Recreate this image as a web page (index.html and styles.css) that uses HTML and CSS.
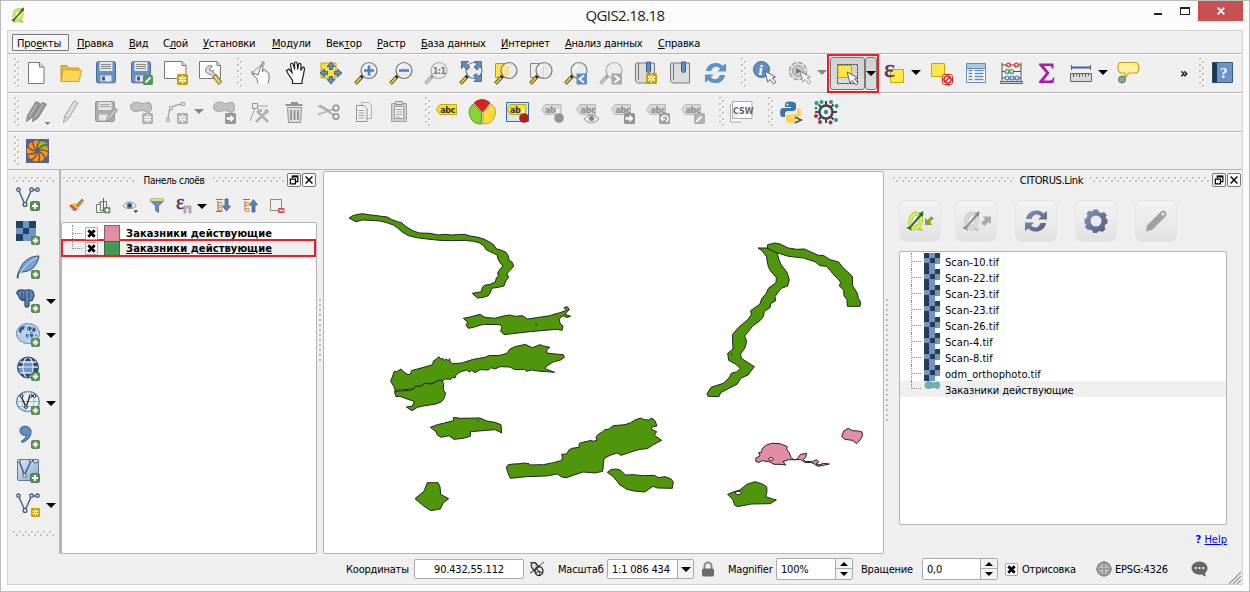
FILE: index.html
```html
<!DOCTYPE html>
<html lang="ru">
<head>
<meta charset="utf-8">
<title>QGIS2.18.18</title>
<link rel="stylesheet" href="styles.css">
</head>
<body>
<svg class="defs" aria-hidden="true">
  <defs>
    <linearGradient id="gSteel" x1="0" y1="0" x2="1" y2="1"><stop offset="0" stop-color="#8496bd"/><stop offset="1" stop-color="#4e5a78"/></linearGradient>
    <linearGradient id="gPale" x1="0" y1="0" x2="1" y2="1"><stop offset="0" stop-color="#dfe8f2"/><stop offset="1" stop-color="#86a8cf"/></linearGradient>
  </defs>
  <symbol id="plus" viewBox="0 0 10 10"><rect x=".5" y=".5" width="9" height="9" rx="1.500" fill="#5a9157" stroke="#4f814c"/><path d="M5 2v6M2 5h6" stroke="#fff" stroke-width="2"/></symbol>
  <symbol id="star" viewBox="0 0 11 11"><rect width="11" height="11" rx="1.500" fill="#c8a000"/><path d="M5.500 1.500v8M2 3.500l7 4M9 3.500l-7 4" stroke="#fff" stroke-width="1.500"/><circle cx="5.500" cy="5.500" r="1" fill="#c8a000"/></symbol>
  <symbol id="starG" viewBox="0 0 11 11"><rect width="11" height="11" rx="1.500" fill="#aaa"/><path d="M5.500 1.500v8M2 3.500l7 4M9 3.500l-7 4" stroke="#fff" stroke-width="1.500"/><circle cx="5.500" cy="5.500" r="1" fill="#aaa"/></symbol>
  <symbol id="arrG" viewBox="0 0 11 11"><rect width="11" height="11" rx="1.500" fill="#8c8c8c"/><path d="M1.500 4.200h4V1.800l4 3.700-4 3.700V6.800h-4z" fill="#fff"/></symbol>
  <symbol id="lens" viewBox="0 0 24 24"><path d="M1.500 22.500L8.500 15" stroke="#222" stroke-width="3.400"/><path d="M1.800 22.200L7 16.600" stroke="#f6c61c" stroke-width="2.200"/><circle cx="15" cy="9.500" r="8" fill="#e9eaec" fill-opacity=".75" stroke="#777" stroke-width="1.200"/><path d="M9.500 9a6 6 0 0 1 5-5" stroke="#fff" fill="none" stroke-width="1.500"/></symbol>
  <symbol id="lensG" viewBox="0 0 24 24"><path d="M1.500 22.500L8.500 15" stroke="#999" stroke-width="3.400"/><path d="M1.800 22.200L7 16.600" stroke="#ccc" stroke-width="2"/><circle cx="15" cy="9.500" r="8" fill="#ececec" stroke="#aaa" stroke-width="1.200"/></symbol>
  <symbol id="cursor" viewBox="0 0 14 16"><path d="M1 1l3 12 2.500-3 4 5 2.300-2-4-4.600 3.500-1z" fill="#fff" stroke="#555" stroke-linejoin="round"/></symbol>
  <symbol id="blobG" viewBox="0 0 24 24"><path d="M1.500 7C2 2 7 1 11 3c4 1.500 6-1 9-.5s3.500 8 .5 9.500-5-2-8-1.500S2 13.500 1.500 7z" fill="#bcbcbc" stroke="#999"/></symbol>
  <symbol id="tagG" viewBox="0 0 24 24"><path d="M1.500 10.500L5 5.500h15.500v10H5z" fill="#d6d6d6" stroke="#b4b4b4"/><text x="5.500" y="13.500" class="abc" fill="#808080">abc</text></symbol>
  <symbol id="vee" viewBox="0 0 24 24"><path d="M2.500 3L9 17.500 15.500 3H21" fill="none" stroke="#4d6480" stroke-width="1.500"/><g fill="#f4f6f8" stroke="#3f5877" stroke-width="1.300"><circle cx="2.500" cy="2.700" r="1.700"/><circle cx="9" cy="17.500" r="1.900"/><circle cx="15.500" cy="2.700" r="1.700"/><circle cx="21.500" cy="2.700" r="1.700"/></g></symbol>
  <symbol id="qlogo" viewBox="0 0 24 24"><path d="M12 17c2 1 3 5 8 5.500" fill="none" stroke="#c3cc4e" stroke-width="3.200"/><ellipse cx="12" cy="12" rx="6" ry="8.500" transform="rotate(12 12 12)" fill="none" stroke="#a9b34e" stroke-width="4.600"/><ellipse cx="12" cy="12" rx="6" ry="8.500" transform="rotate(12 12 12)" fill="none" stroke="#dfec50" stroke-width="3.400"/><path d="M1 19l4-.5L17 4.500l-2-.5 6-3.500-.5 7-1.500-1.500L7 19.500l.5 4L4.500 21z" fill="#177322"/></symbol>
  <symbol id="qlogoG" viewBox="0 0 24 24"><path d="M12 17c2 1 3 5 8 5.500" fill="none" stroke="#c4c4c4" stroke-width="3.200"/><ellipse cx="12" cy="12" rx="6" ry="8.500" transform="rotate(12 12 12)" fill="none" stroke="#bbb" stroke-width="4.600"/><ellipse cx="12" cy="12" rx="6" ry="8.500" transform="rotate(12 12 12)" fill="none" stroke="#dadada" stroke-width="3.400"/><path d="M1 19l4-.5L17 4.500l-2-.5 6-3.500-.5 7-1.500-1.500L7 19.500l.5 4L4.500 21z" fill="#8a8a8a"/></symbol>
  <symbol id="sync" viewBox="0 0 24 24"><path d="M2 10C3 4 8 1 13 1.500c3 .2 5 1.500 6.500 3L23 2v8.500h-9l3-3c-4-3.500-8-2-9.500 2.500zM22 14c-1 6-6 9-11 8.500-3-.2-5-1.500-6.500-3L1 22v-8.500h9l-3 3c4 3.500 8 2 9.500-2.500z"/></symbol>
  <symbol id="float" viewBox="0 0 14 14"><path d="M5 5V2.500h6.500V9H9" fill="none" stroke="#000" stroke-width="1.400"/><path d="M5 3h6.500" stroke="#000" stroke-width="2"/><path d="M2.700 6h6v5.500h-6z" fill="#fff" stroke="#000" stroke-width="1.400"/></symbol>
  <symbol id="close" viewBox="0 0 14 14"><path d="M3 3l8 8M11 3l-8 8" stroke="#000" stroke-width="1.600"/></symbol>
  <symbol id="rast" viewBox="0 0 16 16"><g shape-rendering="crispEdges"><rect width="16" height="16" fill="#6c95c8"/><path d="M0 0h5v5H0zM6 5h5v5H6zM0 10h5v6H0zM11 0h5v5h-5z" fill="#2c3c50"/><path d="M11 11h5v5h-5z" fill="#fff"/></g></symbol>
</svg>

<div class="window">
  <header class="titlebar">
    <svg class="app-icon" viewBox="0 0 24 24"><use href="#qlogo"/></svg>
    <h1 class="caption">QGIS2.18.18</h1>
    <div class="win-buttons">
      <span class="wb-min"></span><span class="wb-max"></span>
      <span class="wb-close"><svg viewBox="0 0 8 8"><path d="M.7.7l6.600 6.600M7.300.7L.7 7.300" stroke="#fff" stroke-width="1.700"/></svg></span>
    </div>
  </header>

  <div class="client">
    <nav class="menu">
      <span class="open">Про<u>е</u>кты</span><span><u>П</u>равка</span><span><u>В</u>ид</span><span>С<u>л</u>ой</span><span><u>У</u>становки</span><span><u>М</u>одули</span><span>Век<u>т</u>ор</span><span><u>Р</u>астр</span><span><u>Б</u>аза данных</span><span><u>И</u>нтернет</span><span><u>А</u>нализ данных</span><span><u>С</u>правка</span>
    </nav>

    <div class="toolbar">
      <i class="grip"></i>
      <div class="group">
        <svg viewBox="0 0 24 24"><path d="M4.500 1.500h11l4.500 4.500v16.500H4.500z" fill="#fff" stroke="#777"/><path d="M15.500 1.500V6H20" fill="#ddd" stroke="#777"/></svg>
        <svg viewBox="0 0 24 24"><path d="M2 20.500V4.500h6l1.500 2.500H20v3" fill="#e9bd33" stroke="#c79b1c"/><path d="M4 8.500l18.500 1-2.500 11H2z" fill="#fbd658" stroke="#d0a427"/></svg>
        <svg viewBox="0 0 24 24"><rect x="2.500" y=".8" width="19" height="21" rx="1.500" fill="#6391c4" stroke="#4d6d92"/><path d="M5.500 1h13v9h-13z" fill="#e4e7ea"/><path d="M7 3.500h10M7 5.500h10M7 7.500h10" stroke="#888"/><path d="M6.500 14.500h11v6h-11z" fill="#e4e7ea"/><path d="M8 15.500h3v4H8z" fill="#3f5c7e"/></svg>
        <svg viewBox="0 0 24 24"><rect x="2.500" y=".8" width="19" height="21" rx="1.500" fill="#6391c4" stroke="#4d6d92"/><path d="M5.500 1h13v9h-13z" fill="#e4e7ea"/><path d="M7 3.500h10M7 5.500h10M7 7.500h10" stroke="#888"/><path d="M6.500 14.500h11v6h-11z" fill="#e4e7ea"/><path d="M8 15.500h3v4H8z" fill="#3f5c7e"/><rect x="14" y="14" width="10" height="10" rx="1.500" fill="#56905a"/><path d="M16.500 21.500l5-5" stroke="#fff" stroke-width="2"/></svg>
        <svg viewBox="0 0 24 24"><path d="M.5.500H18l4 4V17.500H.5z" fill="#fff" stroke="#777"/><path d="M18 .5v4h4" fill="#ddd" stroke="#777"/><use href="#star" x="13" y="13" width="11" height="11"/></svg>
        <svg viewBox="0 0 24 24"><path d="M.5.500H18l3.500 4V17.500H.5z" fill="#fff" stroke="#777"/><path d="M18 .5v4h3.500" fill="#ddd" stroke="#777"/><path d="M15 14l6.500 8.500" stroke="#8e6c15" stroke-width="4.600"/><path d="M15.500 15l5.500 7" stroke="#f2d06a" stroke-width="2.800"/><path d="M7.500 6.500a4 4 0 0 1 6-1l-3 1.500 1 3 3-.5c-.3 2-.5 2.500 1.500 5l-2.500 1.500c-1-2.500-2-2.500-3.500-3a4 4 0 0 1-2.500-6.500z" fill="#dcdcdc" stroke="#808080"/></svg>
      </div>
      <i class="grip"></i>
      <div class="group nav">
        <svg viewBox="0 0 24 24"><path d="M9 22.500l-1-4.500-4-4 .5-2 4.500 2L12.500 4l1.500 0-.5 7 1-2.500 2 .5.500 1.500 2 .8L20 13v5l-1 4.500" fill="#fff" stroke="#777"/><path d="M3 12.500l2.500-3 7-6L15 1M12 1h3v3M3 10v3h3" stroke="#888" fill="none"/></svg>
        <svg viewBox="0 0 24 24"><path d="M8.500 22.500v-3L4 12.500 2.500 9.500 5 8l3 3.500L6.500 4c0-2 2-2.500 2.700-.5l1.500 5-.2-6c0-2 2.500-2 2.700 0l.5 6 .8-5c.5-1.800 2.500-1.500 2.500.3l-.3 5.700 1.500-2.500c1-1.500 2.500-.5 2.300 1L19 16l-1 3.500v3z" fill="#fff" stroke="#222" stroke-width="1.200"/></svg>
        <svg viewBox="0 0 24 24"><path d="M2 2h15v15H2z" fill="#ffdf3e" stroke="#c5a400"/><path d="M12 1l4 4.500h-2.500v3h-3v-3H8zM12 23l4-4.500h-2.500v-3h-3v3H8zM1 12l4.500-4v2.500h3v3h-3V16zM23 12l-4.500-4v2.500h-3v3h3V16z" fill="#5d8ec4" stroke="#30537d" stroke-width=".8"/></svg>
        <svg viewBox="0 0 24 24"><use href="#lens"/><path d="M15 4.500v10M10 9.500h10" stroke="#4f83bd" stroke-width="2.600"/></svg>
        <svg viewBox="0 0 24 24"><use href="#lens"/><path d="M10 9.500h10" stroke="#4f83bd" stroke-width="2.600"/></svg>
        <svg viewBox="0 0 24 24"><use href="#lensG"/><text x="8.800" y="13" class="one">1:1</text></svg>
        <svg viewBox="0 0 24 24"><use href="#lens"/><path d="M2.500.5h7l-2.500 2.500 4 3-3 3-3.500-3.500-2 2zM22.500.5h-7L18 3l-3 3 3 3 2.500-3.500 2 2zM22.500 20.500v-7.500L20 15.500l-3-3-2.500 2.500 3 3-2.500 2.500z" fill="#5d8ec4" stroke="#355a85" stroke-width=".8"/></svg>
        <svg viewBox="0 0 24 24"><path d="M1.500 2.500h13v14h-13z" fill="#ffe040" stroke="#b99b00"/><use href="#lens"/><path d="M9.500 4.500h5v11L9 13.500z" fill="#f4e489" opacity=".8"/></svg>
        <svg viewBox="0 0 24 24"><path d="M1.500 2.500h13v14h-13z" fill="#ececec" stroke="#888"/><use href="#lens"/></svg>
        <svg viewBox="0 0 24 24"><use href="#lens"/><path d="M12.500 12.500H23v11H12.500z" fill="#5d8ec4"/><path d="M20 14.500L15.500 18l4.500 3.500" stroke="#fff" stroke-width="2" fill="none"/></svg>
        <svg viewBox="0 0 24 24"><use href="#lensG"/><path d="M12.500 12.500H23v11H12.500z" fill="#a8a8a8"/><path d="M15.500 14.500L20 18l-4.500 3.500" stroke="#fff" stroke-width="2" fill="none"/></svg>
        <svg viewBox="0 0 24 24"><path d="M1.500 4c0-3 3-3 3 0v-2h16v20h-17l-2-2zM4.500 4v15" fill="#dcdcdc" stroke="#777"/><path d="M12.500 1h4v9l-2 2-2-2z" fill="#5d8ec4" stroke="#355a85"/><use href="#star" x="12" y="12" width="11" height="11"/></svg>
        <svg viewBox="0 0 24 24"><path d="M1.500 4c0-3 3-3 3 0v-2h16v20h-17l-2-2zM4.500 4v15" fill="#dcdcdc" stroke="#777"/><path d="M12.500 1h4v9l-2 2-2-2z" fill="#5d8ec4" stroke="#355a85"/></svg>
        <svg viewBox="0 0 24 24"><use href="#sync" fill="#5f93cc" width="23"/></svg>
      </div>
      <i class="grip"></i>
      <div class="group info">
        <svg viewBox="0 0 24 24"><circle cx="8.500" cy="8.500" r="8" fill="#5f8fc5" stroke="#416a9c"/><text x="5.500" y="14" class="info-i">i</text><use href="#cursor" x="11" y="9" width="13" height="15"/></svg>
        <svg viewBox="0 0 24 24"><circle cx="10" cy="10" r="8.500" fill="#e2e2e2" stroke="#a2a2a2" stroke-width="1.600" stroke-dasharray="5 1.600"/><circle cx="10" cy="10" r="5.500" fill="#c8c8c8" stroke="#999"/><path d="M8 7l5 3-5 3z" fill="#777"/><g opacity=".6"><use href="#cursor" x="11" y="9" width="13" height="15"/></g></svg>
      </div>
      <i class="drop dim"></i>
      <div class="select-box">
        <span class="pressed"><svg viewBox="0 0 24 24"><path d="M1.500 2.500h20v19h-20z" fill="none" stroke="#333" stroke-dasharray="2 1"/><path d="M2 3.500h13.500v12H2z" fill="#ffe74a" stroke="#c9a800"/><use href="#cursor" x="10" y="9" width="13.500" height="15"/></svg></span><span class="pressed narrow"><i class="drop"></i></span>
      </div>
      <svg class="i-eps" viewBox="0 0 24 24"><path d="M7.500 8.500h13v13h-13z" fill="#ffe74a" stroke="#c9a800"/><text x="1" y="15.500" class="eps">ε</text></svg>
      <i class="drop"></i>
      <div class="group attr">
        <svg viewBox="0 0 24 24"><path d="M1.500 2.500h13v13h-13z" fill="#ffe74a" stroke="#c9a800"/><rect x="12.500" y="13.500" width="10" height="10" rx="2" fill="#fff" stroke="#d22"/><circle cx="17.500" cy="18.500" r="3.500" fill="none" stroke="#d22" stroke-width="1.700"/><path d="M15 21l5-5" stroke="#d22" stroke-width="1.700"/></svg>
        <svg viewBox="0 0 24 24"><path d="M1.500 2.500h19v19h-19z" fill="#fff" stroke="#5d8ec4"/><path d="M2 3h18v4.500H2z" fill="#a8c8e8"/><path d="M2 7.500h18" stroke="#5d8ec4"/><path d="M3.500 9.500h4M3.500 12.500h4M3.500 15.500h4M3.500 18.500h4M9.500 9.500h9M9.500 12.500h9M9.500 15.500h9M9.500 18.500h9" stroke="#6a8aac" stroke-width="1.300"/></svg>
        <svg viewBox="0 0 24 24"><path d="M2 1.500v20M21 1.500v20M2 4h19M2 10.500h19M2 17h19" stroke="#555" fill="none"/><path d="M.5 20.500h22v2H.5z" fill="#ccc" stroke="#666"/><g stroke-width="1.200"><g fill="#f5c2c0" stroke="#c5332e"><circle cx="8.500" cy="4" r="2"/><circle cx="16.500" cy="4" r="2"/></g><g fill="#c4ecc8" stroke="#3f9a4a"><circle cx="7" cy="10.500" r="2"/><circle cx="11.500" cy="10.500" r="2"/></g><g fill="#cfe2f4" stroke="#4379b0"><circle cx="7" cy="17" r="2"/><circle cx="12" cy="17" r="2"/><circle cx="17" cy="17" r="2"/></g></g></svg>
        <svg viewBox="0 0 24 24"><path d="M4 2.500h14.500v5h-1.500c-.5-2-1-2.500-3.500-2.500H9l5.500 7-6 7.500h6c2.500 0 3-1 3.500-3h1.500l-1 5.500H4v-1.500l7-8.500-7-8z" fill="#a81cb0"/></svg>
        <svg viewBox="0 0 24 24"><path d="M1 6.500h20" stroke="#3f6797" stroke-width="2"/><path d="M1.500 4v5M20.500 4v5" stroke="#3f6797"/><path d="M.5 12.500h21v8H.5z" fill="#d8d8d8" stroke="#666"/><path d="M3.500 13v3M6.500 13v2M9.500 13v3M12.500 13v2M15.500 13v3M18.500 13v2" stroke="#555"/></svg>
      </div>
      <i class="drop"></i>
      <svg class="i-tip" viewBox="0 0 24 24"><path d="M4 1.500h14c3 0 4 2 4 5s-1 5.500-4 5.500h-6L8 17V12H5c-3 0-4-2.500-4-5.500s1-5 3-5z" fill="#fdf29a" stroke="#c9a21a" stroke-width="1.200"/><circle cx="5" cy="18.500" r="3.500" fill="#7cb07c" stroke="#557f59"/></svg>
      <span class="more">»</span>
      <i class="grip"></i>
      <svg viewBox="0 0 24 24"><path d="M1.500 1.500h20v20h-20z" fill="#6896cb" stroke="#3b5a80"/><path d="M1.500 1.500H6v20H1.500z" fill="#26364a"/><text x="9" y="17" class="book-q">?</text></svg>
    </div>

    <div class="toolbar second">
      <i class="grip"></i>
      <div class="group edit">
        <svg class="dis" viewBox="0 0 28 24"><path d="M2.500 21.500l1-6L12 1.500l4 2-8 14zM8.500 21.500l1-6L18 2.500l4.500 1.500-8.500 14z" fill="#8f8f8f" stroke="#777"/><path d="M5 17l8-13M11 17l8-13" stroke="#bbb"/><path d="M20.500 22h6l-3 3z" fill="#777"/></svg>
        <svg class="dis" viewBox="0 0 24 24"><path d="M4.500 22.500l1-6L15 1l4 2-9.500 15.500zM5.500 16.500l4 2" fill="#ddd" stroke="#999"/></svg>
        <svg class="dis" viewBox="0 0 24 24"><rect x="1.500" y="1.500" width="19" height="20" rx="1.500" fill="#a6a6a6" stroke="#8e8e8e"/><path d="M4.500 2h13v8h-13zM5 14.500h10v6H5z" fill="#e4e4e4"/><path d="M6 4.500h10M6 6.500h10" stroke="#999"/><path d="M12 22l2-6 7-8 2.500 2-7 9z" fill="#bbb" stroke="#888"/></svg>
        <svg class="dis" viewBox="0 0 24 24"><use href="#blobG"/><use href="#starG" x="13" y="13" width="11" height="11"/></svg>
        <svg class="dis" viewBox="0 0 24 24"><path d="M4 20C4 8 8 5 19 4" fill="none" stroke="#999" stroke-width="1.300"/><g fill="#eee" stroke="#999"><path d="M17.500 2.500h3v3h-3zM5.500 6.500h3v3h-3zM2.500 18.500h3v3h-3z"/></g><use href="#starG" x="13" y="13" width="11" height="11"/></svg>
      </div>
      <i class="drop dim"></i>
      <div class="group edit2">
        <svg class="dis" viewBox="0 0 24 24"><use href="#blobG"/><use href="#arrG" x="13" y="13" width="11" height="11"/></svg>
        <svg class="dis" viewBox="0 0 24 24"><path d="M8 6h13M8 8L3 21" stroke="#999" fill="none"/><path d="M5.500 3.500h5v5h-5z" fill="#eee" stroke="#888"/><path d="M10 11l11 11M21 10L9 22M11 10l4 1M18 10l3 3" stroke="#aaa" stroke-width="2.500"/></svg>
        <svg class="dis" viewBox="0 0 24 24"><path d="M5.500 7.500h14l-1 15h-12z" fill="#ddd" stroke="#888"/><path d="M9 10v10M12.500 10v10M16 10v10M3.500 5h17M9 3h7" stroke="#888" stroke-width="1.800"/></svg>
        <svg class="dis" viewBox="0 0 24 24"><path d="M1 5.500L17 15M1 14.500L17 9" stroke="#aaa" stroke-width="1.800"/><path d="M3 5l10 6" stroke="#888"/><g fill="none" stroke="#888" stroke-width="1.600"><circle cx="19" cy="8" r="2.800"/><circle cx="19" cy="16.500" r="2.800"/></g></svg>
        <svg class="dis" viewBox="0 0 24 24"><path d="M9.500 2.500h7l3 3v13h-10z" fill="#eee" stroke="#aaa"/><path d="M4.500 5.500h7.500l3 3v13H4.500z" fill="#f2f2f2" stroke="#888"/><path d="M6.500 10.500h6M6.500 13h6M6.500 15.500h6M6.500 18h6" stroke="#999"/></svg>
        <svg class="dis" viewBox="0 0 24 24"><path d="M4.500 3.500h15v18h-15z" fill="#c8c8c8" stroke="#999"/><path d="M7.500 6.500h9v12h-9z" fill="#f4f4f4" stroke="#999"/><path d="M8.500 1.500h7v3h-7z" fill="#ddd" stroke="#888"/><path d="M9 9.500h6M9 12h6M9 14.500h6M9 17h4" stroke="#999"/></svg>
      </div>
      <i class="grip"></i>
      <div class="group labels">
        <svg viewBox="0 0 24 24"><path d="M1.500 9.500L5 4.500h16.500v10H5z" fill="#f7dd34" stroke="#c9a800"/><text x="5.200" y="12.500" class="abc" fill="#333">abc</text></svg>
        <svg viewBox="0 0 24 24"><path d="M12.500 12L4 3a11 11 0 0 1 16 0z" fill="#d8231f" stroke="#8e2410" stroke-width=".8"/><path d="M11.500 12.500V24A11.500 11.500 0 0 1 3 4z" fill="#84d52c" stroke="#4f8c1a" stroke-width=".8"/><path d="M13 12.500V24A11.500 11.500 0 0 0 21.500 4z" fill="#ffdb3e" stroke="#b08a10" stroke-width=".8"/></svg>
        <svg viewBox="0 0 24 24"><path d="M1.500 2.500h22v19h-22z" fill="#d9e7f7" stroke="#2c6fc4"/><path d="M2 9.500L5 4.500h16v10H5z" fill="#f7dd34" stroke="#c9a800"/><text x="5" y="12.500" class="abc" fill="#333">ab</text><path d="M18 9v7" stroke="#eee" stroke-width="2.500"/><circle cx="19" cy="18" r="4.800" fill="#b01f1f"/></svg>
        <svg class="dis" viewBox="0 0 24 24"><path d="M1.500 9.500L5 4.500h16v10H5z" fill="#d6d6d6" stroke="#b4b4b4"/><text x="5" y="12.500" class="abc" fill="#808080">ab</text><path d="M18 9v7" stroke="#eee" stroke-width="3"/><circle cx="19" cy="18" r="4.800" fill="#8a8a8a"/></svg>
        <svg class="dis" viewBox="0 0 24 24"><use href="#tagG" y="-1"/><path d="M9 19c4-5 11-5 15 0-4 5-11 5-15 0z" fill="#e8e8e8" stroke="#888"/><circle cx="16.500" cy="18.500" r="2.500" fill="#777"/></svg>
        <svg class="dis" viewBox="0 0 24 24"><use href="#tagG" y="-1"/><use href="#arrG" x="14" y="13" width="11" height="11"/></svg>
        <svg class="dis" viewBox="0 0 24 24"><use href="#tagG" y="-1"/><rect x="14" y="13" width="11" height="11" rx="1.500" fill="#999"/><path d="M17 19a3 3 0 1 1 4 2.500M16 17l1 3 3-1" fill="none" stroke="#fff" stroke-width="1.400"/></svg>
        <svg class="dis" viewBox="0 0 24 24"><use href="#tagG" y="-1"/><rect x="14" y="13" width="11" height="11" rx="1.500" fill="#aaa"/><path d="M16.500 21.500l5-5" stroke="#fff" stroke-width="2"/></svg>
      </div>
      <i class="grip"></i>
      <svg class="i-csw" viewBox="0 0 24 24"><path d="M1.500 4v18H12M3.500 1.500H23v17H3.500z" fill="#fff" stroke="#aaa"/><text x="4" y="13.500" class="csw">CSW</text></svg>
      <i class="grip"></i>
      <svg class="i-py" viewBox="0 0 24 24"><path d="M11 1.500c-4 0-5 1-5 3V7h6v1H4C2 8 1 10 1 12.500s1 4.500 3 4.500h2v-3c0-2 1-3 3-3h5c2 0 3-1 3-3V4.500c0-2-2-3-6-3z" fill="#3a76ac"/><path d="M12.500 23c4 0 5-1.500 5-3v-2.500h-6v-1h8c2 0 3-1.500 3-4S21.500 8.500 20 8.500h-2v3c0 2-1 3-3 3H10c-2 0-3 1-3 3V20c0 2 2 3 5.500 3z" fill="#fcd34c"/><circle cx="8.500" cy="4.500" r="1" fill="#fff"/><path d="M16 17l6 3-6 3" fill="none" stroke="#555" stroke-width="1.800"/></svg>
      <svg viewBox="0 0 24 24"><circle cx="12" cy="12" r="6.500" fill="#eee" stroke="#444" stroke-width="2.400"/><path d="M12 1v5M12 18v5M1 12h5M18 12h5M4.500 4.500l3.500 3.500M16 16l3.500 3.500M19.500 4.500L16 8M8 16l-3.500 3.500" stroke="#444" stroke-width="2"/><circle cx="12" cy="12" r="2.200" fill="#2b8ca8"/><g fill="#1fa08a"><circle cx="2.500" cy="3" r="2"/><circle cx="7.500" cy="2" r="2"/><circle cx="2" cy="8" r="1.500"/></g><g fill="#2b8ca8"><circle cx="17" cy="2" r="2"/><circle cx="22.500" cy="6" r="2"/><circle cx="22" cy="20" r="2"/></g><g fill="#b02a5c"><circle cx="2" cy="16" r="2"/><circle cx="6" cy="22" r="2"/><circle cx="16.500" cy="22.500" r="2"/></g></svg>
    </div>

    <div class="toolbar third">
      <i class="grip"></i>
      <svg viewBox="0 0 24 24"><path d="M1 0h23v24H1z" fill="#59648a"/><circle cx="12.500" cy="12" r="10.600" fill="#f7941e"/><path d="M12.500 12C12.500 8 14 4 18 2.500l4.500 2c.6 3-4 6-10 7.500z" fill="#7cc52a"/><g fill="none" stroke="#5a4a52" stroke-width="1.200"><path id="rib" d="M12.500 12C11.500 8 12.500 4 16 .8"/><use href="#rib" transform="rotate(40 12.500 12)"/><use href="#rib" transform="rotate(80 12.500 12)"/><use href="#rib" transform="rotate(120 12.500 12)"/><use href="#rib" transform="rotate(160 12.500 12)"/><use href="#rib" transform="rotate(200 12.500 12)"/><use href="#rib" transform="rotate(240 12.500 12)"/><use href="#rib" transform="rotate(280 12.500 12)"/><use href="#rib" transform="rotate(320 12.500 12)"/></g><circle cx="12.500" cy="12" r="1.800" fill="#59648a"/></svg>
    </div>

    <div class="body">
      <aside class="side">
        <i class="hgrip"></i>
        <div class="side-item"><svg viewBox="0 0 24 24"><use href="#vee"/><use href="#plus" x="14" y="14" width="10" height="10"/></svg></div>
        <div class="side-item"><svg viewBox="0 0 24 24"><path d="M0 0h20v20H0z" fill="#6c95c8"/><path d="M0 0h7v7H0zM13 0h7v7h-7zM7 7h6v6H7zM0 13h7v7H0z" fill="#26405f"/><use href="#plus" x="15" y="15" width="9" height="9"/></svg></div>
        <div class="side-item"><svg viewBox="0 0 24 24"><path d="M1 23C1 19 4 14 6 10c3-5 9-9 17-9-1 5-3 11-9 14-4 2-8 2-10 2-1 1-2 4-2 6z" fill="#79a3cf" stroke="#345578"/><path d="M3 20C8 12 14 6 21 2.500" stroke="#d5e3f0" fill="none"/><use href="#plus" x="15" y="15" width="9" height="9"/></svg></div>
        <div class="side-item"><svg viewBox="0 0 24 24"><path d="M1 3c2-3 6-2 8-1.500 3-1 6-1 8 1 1.500 3 1 6-1 9h-3v5c-1 2-3.500 2-4 0v-6l-2 1c-2-.5-3-1-4-4S0 5 1 3z" fill="#5c86b8" stroke="#2d4c74" stroke-width="1.300"/><path d="M6 3v6c1 1 2 1 3 0V3M13 3v6" stroke="#26456c" fill="none"/><use href="#plus" x="15" y="15" width="9" height="9"/></svg><i class="drop"></i></div>
        <div class="side-item"><svg viewBox="0 0 24 24"><ellipse cx="12" cy="10.500" rx="11.500" ry="10" fill="#b5cfe9" stroke="#5d86b5"/><path d="M3 6c2-3 4-3 6-3l-1 3-3 2 1 3-3-2zM11 4c2-1 4 0 5 1l-2 3-3-1zM17 4l3 2-1 3-3-1zM10 10l3 1-1 5-2-3zM14 9l4 1-2 5-2-2zM19 12l2-1-1 3z" fill="#345880"/><path d="M1 10.500h22M12 .5v20" stroke="#d6e5f4" stroke-width=".7"/><use href="#plus" x="15" y="15" width="9" height="9"/></svg><i class="drop"></i></div>
        <div class="side-item"><svg viewBox="0 0 24 24"><circle cx="12" cy="10.500" r="10.500" fill="#2d4c74"/><path d="M8 4h8v5H8zM8 11h8v5H8zM2 10h5v5H3z" fill="#6c95c8"/><path d="M1.500 10h21M3 5h18M3 16h18" stroke="#dce8f4" stroke-width="1.300"/><ellipse cx="12" cy="10.500" rx="5" ry="10.500" fill="none" stroke="#dce8f4" stroke-width="1.300"/><circle cx="12" cy="10.500" r="10.500" fill="none" stroke="#2d4c74"/><use href="#plus" x="15" y="15" width="9" height="9"/></svg></div>
        <div class="side-item"><svg viewBox="0 0 24 24"><ellipse cx="12" cy="10.500" rx="11.300" ry="10" fill="#edf3f9" stroke="#5f90c6" stroke-width="1.300"/><path d="M1 10.500h22M3 15.500h18" stroke="#8db2da"/><ellipse cx="12" cy="10.500" rx="6" ry="10" fill="none" stroke="#8db2da"/><path d="M5 5l5 11 4-11h5" fill="none" stroke="#222" stroke-width="1.300"/><g fill="#fff" stroke="#222"><circle cx="5.500" cy="5" r="1.400"/><circle cx="10" cy="16" r="1.400"/><circle cx="14.500" cy="5" r="1.400"/><circle cx="18.500" cy="5" r="1.400"/></g><use href="#plus" x="15" y="15" width="9" height="9"/></svg><i class="drop"></i></div>
        <div class="side-item"><svg viewBox="0 0 24 24"><path d="M4 5.500C4 0 14-.5 15 6c.3 6-4 10-9 11.500l-.5-1.500c3-1.500 4.500-3.500 5-6C7 11 4 9 4 5.500z" fill="#5d8ec4" stroke="#365780"/><use href="#plus" x="15" y="15" width="9" height="9"/></svg></div>
        <div class="side-item"><svg viewBox="0 0 24 24"><rect x="1.500" y=".5" width="21" height="21" rx="1" fill="url(#gPale)" stroke="#5d7b9e"/><path d="M3 2l5.500 14L15 2h3" fill="none" stroke="#3f5877" stroke-width="1.400"/><circle cx="8.500" cy="16.500" r="1.800" fill="#eef" stroke="#3f5877"/><path d="M1.500 3a2 2 0 0 0 3-2M13 1a2 2 0 0 0 4 0 2 2 0 0 0 5 1" stroke="#3f5877" fill="#eef"/><use href="#plus" x="14" y="14" width="10" height="10"/></svg></div>
        <div class="side-item"><svg viewBox="0 0 24 24"><use href="#vee"/><use href="#star" x="15" y="15" width="9" height="9"/></svg><i class="drop"></i></div>
        <i class="hgrip last"></i>
      </aside>

      <section class="dock layers">
        <div class="dock-title"><i class="hgrip"></i><span>Панель слоёв</span><i class="hgrip"></i><b><svg viewBox="0 0 14 14"><use href="#float"/></svg></b><b><svg viewBox="0 0 14 14"><use href="#close"/></svg></b></div>
        <div class="mini-bar">
          <svg viewBox="0 0 16 16"><path d="M1 8l7 5 2-3-6-4z" fill="#e8482d"/><path d="M3 6l6 5 2-2-5-4z" fill="#f7c12c"/><path d="M2 10l4 3 2-1z" fill="#4b86c8"/><path d="M8 7l6-6 1.500 1.500-5 6.500z" fill="#c78a4e" stroke="#87562a" stroke-width=".6"/></svg>
          <svg viewBox="0 0 16 16"><path d="M1.500 6.500h7v8h-7zM3.500 4.500h7v8" fill="none" stroke="#777"/><path d="M5.500 3.500h6v9h-6z" fill="#eee" stroke="#777"/><path d="M8.500 0v12" stroke="#3a668f"/><use href="#plus" x="9" y="9" width="6.500" height="6.500"/></svg>
          <svg viewBox="0 0 18 16"><path d="M1 8c4-6 12-6 15 0-4 4-11 4-15 0z" fill="#eef1f4" stroke="#888"/><circle cx="8.500" cy="7.500" r="3.200" fill="#4f7db3"/><circle cx="8.500" cy="7.500" r="1.300" fill="#111"/><path d="M13 13h5l-2.500 2.500z" fill="#111"/></svg>
          <svg viewBox="0 0 16 16"><path d="M1.500 1h13v2l-5 5v6.500l-3-2V8l-5-5z" fill="#5f90c6" stroke="#496f9a" stroke-width=".8"/><path d="M1.500 1h13v2h-13z" fill="#f4de3a"/></svg>
          <svg viewBox="0 0 16 16"><text x="0" y="11" class="eps small">ε</text><path d="M8 8h2v7H8zM11 8h4v7h-2v-5h-2z" fill="#bbb" stroke="#888" stroke-width=".6"/></svg>
          <i class="drop"></i>
          <svg viewBox="0 0 16 16"><path d="M1 1.500h7M3 3v10M1 13.500h6" stroke="#777" fill="none"/><path d="M4 4.500h3v3H4zM4 9.500h3v3H4z" fill="#fff" stroke="#f08c1e"/><path d="M10 1h3v7h2.500l-4 5-4-5H10z" fill="#4f83bd" stroke="#2f5784" stroke-width=".7"/></svg>
          <svg viewBox="0 0 16 16"><path d="M1 1.500h7M3 3v10" stroke="#777" fill="none"/><path d="M4 4.500h3v3H4zM4 10.500h3v3H4z" fill="#fff" stroke="#f08c1e"/><path d="M10 14h3V7h2.500l-4-5.500L7.500 7H10z" fill="#4f83bd" stroke="#2f5784" stroke-width=".7"/></svg>
          <svg viewBox="0 0 16 16"><path d="M1.500 1.500h11v11h-11z" fill="#f2f2f2" stroke="#888"/><rect x="9" y="10" width="6.500" height="5" rx="1" fill="#e0484d"/><path d="M10.500 12.500h4" stroke="#fff" stroke-width="1.300"/></svg>
        </div>
        <div class="tree">
          <div class="layer"><i class="branch"></i><i class="check"><svg viewBox="0 0 12 12"><path d="M2.500 2.500l7 7M9.500 2.500l-7 7" stroke="#000" stroke-width="3"/></svg></i><i class="swatch pink"></i><span>Заказники действующие</span></div>
          <div class="layer current"><i class="branch end"></i><i class="check"><svg viewBox="0 0 12 12"><path d="M2.500 2.500l7 7M9.500 2.500l-7 7" stroke="#000" stroke-width="3"/></svg></i><i class="swatch green"></i><span>Заказники действующие</span></div>
        </div>
      </section>

      <div class="splitter s1"><i></i></div>

      <main class="map">
        <svg viewBox="324 172 559 381">
          <g class="green">
            <path transform="translate(330 190) scale(.33333)" d="M57 84L68 77 84 73 98 71 115 74 133 76 155 79 172 81 184 88 202 95 215 98 222 105 235 114 250 123 268 129 300 130 325 135 345 133 365 135 404 133 420 138 440 141 462 147 480 157 492 165 498 176 515 181 528 187 535 198 537 210 547 217 551 229 540 241 531 251 536 262 528 272 522 288 505 292 485 295 482 306 475 317 460 322 442 324 427 310 455 305 456 295 463 286 480 283 496 276 499 264 505 257 503 249 510 238 519 228 510 218 503 205 502 195 490 190 478 184 467 178 462 168 447 158 430 154 405 151 370 152 330 151 290 147 260 143 235 137 215 125 203 114 190 105 170 98 150 93 120 91 98 90 77 95z"/>
            <path transform="translate(330 190) scale(.33333)" d="M400 385L420 381 450 373 465 382 495 385 520 378 540 375 555 379 578 377 592 387 620 383 660 377 675 372 687 369 710 361 702 353 712 350 718 359 712 365 705 373 722 379 708 383 703 378 693 380 688 388 690 400 699 408 696 421 680 418 600 425 565 429 522 434 512 424 516 409 508 404 460 403 430 412 415 415 408 405 413 397z"/>
            <path transform="translate(380 330) scale(.33333)" d="M32 154L43 124 50 125 63 117 73 127 84 134 92 132 94 122 120 115 158 104 160 93 168 88 176 80 183 87 190 86 194 92 198 87 205 92 209 86 210 94 217 101 245 99 280 88 315 82 325 77 360 76 380 70 390 57 405 50 437 43 447 49 457 53 480 44 490 48 510 52 501 58 500 69 525 72 550 74 553 82 542 90 520 96 500 108 495 116 524 127 500 125 480 124 455 120 440 124 433 118 405 119 390 111 360 110 345 117 333 113 325 120 300 119 285 128 275 121 268 126 260 120 240 126 228 135 225 144 218 142 213 148 195 147 188 153 175 151 165 157 150 161 132 161 120 170 95 177 45 181 42 170z"/>
            <path transform="translate(380 330) scale(.33333)" d="M43 184L90 181 102 176 105 169 125 168 133 160 155 162 170 153 184 150 191 160 190 180 197 190 192 205 185 215 168 222 130 228 112 232 96 242 79 231 97 228 103 214 84 208 60 199 48 200z"/>
            <path transform="translate(380 330) scale(.33333)" d="M151 292L172 284 190 280 220 272 221 262 240 265 300 264 320 273 345 277 363 284 365 309 358 305 345 299 272 305 271 319 250 325 222 328 207 317 183 322 172 315 168 305z"/>
            <path transform="translate(380 330) scale(.33333)" d="M379 412L385 404 400 402 420 401 430 399 447 401 450 405 490 404 520 398 542 392 548 384 545 373 560 372 567 360 575 355 597 352 598 340 612 336 635 331 640 334 651 331 648 320 655 313 668 305 675 299 685 298 700 287 735 284 752 278 765 270 783 264 792 269 806 270 815 264 825 272 831 288 816 291 814 298 830 305 823 316 845 331 830 339 817 346 802 356 780 358 762 363 745 369 723 376 712 369 690 376 672 386 668 424 645 429 610 426 585 434 560 443 545 441 532 432 500 438 440 440 391 445 383 427z"/>
            <path transform="translate(380 330) scale(.33333)" d="M682 427L692 419 708 417 720 420 737 435 760 434 790 437 823 436 835 443 855 440 872 446 880 455 877 475 832 474 819 469 808 476 795 486 762 483 741 478 720 465 700 440z"/>
            <path transform="translate(380 330) scale(.33333)" d="M142 458H174L180 470 182 493 206 506 190 518 181 537 152 542 130 527 105 506 132 484z"/>
            <path transform="translate(680 225) scale(.33333)" d="M234 69H262L292 85 297 105 304 120 321 142 328 165 323 183 304 190 295 201 285 215 287 227 272 236 270 248 253 259 250 275 240 287 218 303 205 320 194 333 200 349 195 368 182 387 184 400 223 425 204 450 182 460 172 477 122 503 117 515 84 514 81 506 93 487 130 475 147 459 154 445 170 440 181 431 168 418 146 406 143 385 159 372 157 329 175 308 203 284 214 269 212 257 240 237 245 221 259 205 265 190 288 173 289 158 271 137 265 125 259 94 247 78z"/>
            <path transform="translate(680 225) scale(.33333)" d="M263 59L285 54 300 57 325 69 350 73 373 72 400 84 415 91 430 91 450 104 476 111 488 127 500 138 517 154 518 182 532 205 535 220 542 232 540 244H502L501 224 492 212 491 195 478 183 482 172 472 160 462 150 440 124 420 122 405 110 370 99 325 94 290 83 262 70z"/>
            <path transform="translate(680 225) scale(.33333)" d="M143 808L162 800 180 795 200 778 225 770 245 776 260 785 261 800 257 815 275 821 289 825 270 836 215 837 172 845 164 840 158 823z"/>
          </g>
          <g class="pink">
            <path transform="translate(680 225) scale(.33333)" d="M227 700L240 693 236 683 244 682 247 670 260 660 275 655 300 656 322 665 320 673 328 684 333 697 341 704 350 703 362 688 380 685 377 697 370 703 375 709 397 710 410 704 416 712 408 717 417 720 430 715 448 717 430 721 413 724 403 717 395 713 375 712 362 704 350 704 325 704 309 710 318 720 300 718 282 718 270 711 247 707 237 712 228 710z"/>
            <path transform="translate(680 225) scale(.33333)" d="M485 635L491 618 505 610 517 617 535 618 546 621 548 632 540 645 530 656 517 646 495 643z"/>
          </g>
          <g class="hole"><ellipse cx="738.300" cy="493" rx="3" ry="1.600"/><ellipse cx="771" cy="459" rx="2.300" ry="1.400"/></g>
          <g class="knot"><circle cx="536.500" cy="324.500" r="1"/><circle cx="478.300" cy="421" r=".8"/><circle cx="731.500" cy="354" r=".8"/></g>
        </svg>
      </main>

      <div class="splitter s2"><i></i></div>

      <section class="dock link">
        <div class="dock-title"><i class="hgrip"></i><span>CITORUS.Link</span><i class="hgrip"></i><b><svg viewBox="0 0 14 14"><use href="#float"/></svg></b><b><svg viewBox="0 0 14 14"><use href="#close"/></svg></b></div>
        <div class="big-bar">
          <button><svg viewBox="0 0 30 24"><use href="#qlogo" width="21" height="24"/><path d="M29 9l-4 4 2 3h-7V9l2.500 2L26 7.500z" fill="#78ab2d"/></svg></button>
          <button><svg viewBox="0 0 30 24"><use href="#qlogoG" width="21" height="24"/><path d="M20 14l4-4-2-2.500h8V15l-2.500-2-4 4z" fill="#aaa"/></svg></button>
          <button><svg viewBox="0 0 24 24"><use href="#sync" fill="url(#gSteel)"/></svg></button>
          <button><svg viewBox="0 0 24 24"><path d="M10 .5h4l1 2.600 2.500 1L20 3l3 3-1.500 2.600L22.500 10l1 .5v4l-2 .5-1 2.500 1 2.500-3 3-2.500-1-2.500 1-.7 1h-3.600l-1-2.600-2.500-1L4 21l-3-3 1.200-2.500L.5 14v-4l2-1 1-2.500L2.500 4l3-2.500L8 2.600zM12 6.500a5.500 5.500 0 1 0 0 11 5.500 5.500 0 0 0 0-11z" fill="url(#gSteel)"/></svg></button>
          <button><svg viewBox="0 0 24 24"><path d="M2 22.500l1-6L17 2.500q2.500-2 4.500.2t.2 4.500L8 21z" fill="#a2a2a2"/><circle cx="19" cy="5" r="1.500" fill="#eee"/></svg></button>
        </div>
        <ul class="files">
          <li><i class="branch"></i><svg viewBox="0 0 16 16"><use href="#rast"/></svg>Scan-10.tif</li>
          <li><i class="branch"></i><svg viewBox="0 0 16 16"><use href="#rast"/></svg>Scan-22.tif</li>
          <li><i class="branch"></i><svg viewBox="0 0 16 16"><use href="#rast"/></svg>Scan-23.tif</li>
          <li><i class="branch"></i><svg viewBox="0 0 16 16"><use href="#rast"/></svg>Scan-23.tif</li>
          <li><i class="branch"></i><svg viewBox="0 0 16 16"><use href="#rast"/></svg>Scan-26.tif</li>
          <li><i class="branch"></i><svg viewBox="0 0 16 16"><use href="#rast"/></svg>Scan-4.tif</li>
          <li><i class="branch"></i><svg viewBox="0 0 16 16"><use href="#rast"/></svg>Scan-8.tif</li>
          <li><i class="branch"></i><svg viewBox="0 0 16 16"><use href="#rast"/></svg>odm_orthophoto.tif</li>
          <li class="current"><i class="branch end"></i><svg viewBox="0 0 16 16"><path d="M1 4c0-4 4-4 7-2.500s5-2 7 0 0 7-2 6-3-1.500-6-.5-6 1-6-3z" fill="#6fb0b0" stroke="#5c9696" stroke-width=".7"/></svg>Заказники действующие</li>
        </ul>
        <p class="help"><b>?</b> <a>Help</a></p>
      </section>
    </div>

    <footer class="status">
      <span class="label t-coord">Координаты</span>
      <span class="field coord">90.432,55.112</span>
      <svg class="i-mouse" viewBox="0 0 16 16"><path d="M1 1l5 4M2 6l4-1M6 1l2 3M11 4l4-3" stroke="#555"/><ellipse cx="6" cy="6" rx="3" ry="5" transform="rotate(-35 6 6)" fill="#ddd" stroke="#222" stroke-width="1.300"/><ellipse cx="10" cy="10" rx="4" ry="4.500" fill="#eee" stroke="#222" stroke-width="1.300"/><path d="M1 12l8-5 2-3M7 8l6 4" stroke="#222" fill="none"/><circle cx="9" cy="12.500" r="1.800" fill="#fff" stroke="#222"/></svg>
      <span class="label t-scale">Масштаб</span>
      <span class="field scale"><em>1:1 086 434</em><b><i class="drop"></i></b></span>
      <svg class="i-lock" viewBox="0 0 14 16"><path d="M3.500 8V5a3.500 3.500 0 0 1 7 0v3" fill="none" stroke="#888" stroke-width="2"/><rect x="1" y="7.500" width="12" height="8" rx="1.500" fill="#6a6a6a"/></svg>
      <span class="label t-magn">Magnifier</span>
      <span class="field spin magn"><em>100%</em><b><i class="up"></i><i class="down"></i></b></span>
      <span class="label t-rot">Вращение</span>
      <span class="field spin rot"><em>0,0</em><b><i class="up"></i><i class="down"></i></b></span>
      <i class="check"><svg viewBox="0 0 12 12"><path d="M2.500 2.500l7 7M9.500 2.500l-7 7" stroke="#000" stroke-width="3"/></svg></i>
      <span class="label t-render">Отрисовка</span>
      <svg class="i-globe" viewBox="0 0 16 16"><circle cx="8" cy="8" r="6.600" fill="#ddd" stroke="#888" stroke-width="2"/><ellipse cx="8" cy="8" rx="3.200" ry="6.600" fill="none" stroke="#999"/><ellipse cx="8" cy="8" rx="6.600" ry="3.200" fill="none" stroke="#999"/><path d="M8 0v16M0 8h16" stroke="#777"/></svg>
      <span class="label t-epsg">EPSG:4326</span>
      <svg class="i-chat" viewBox="0 0 17 16"><path d="M8.500.5c4.500 0 8 3 8 6.500 0 2.500-1 4-2.500 5 0 1 .5 2.500 1.500 3.500-2 0-3.500-1-4.500-2-7 1-10.500-3-10.500-6.500S4 .5 8.500.5z" fill="#666"/><g fill="#fff"><circle cx="4.800" cy="7" r="1.100"/><circle cx="8.500" cy="7" r="1.100"/><circle cx="12.200" cy="7" r="1.100"/></g></svg>
      <svg class="i-size" viewBox="0 0 13 13"><path d="M1 13L13 1M5 13l8-8M9 13l4-4" stroke="#999" stroke-width="1.300"/></svg>
    </footer>
  </div>
</div>
</body>
</html>
```

FILE: styles.css
```css
* { box-sizing: border-box; }
body {
  margin: 0;
  font: 11px/16px "DejaVu Sans Condensed", "DejaVu Sans", sans-serif;
  font-stretch: condensed;
  letter-spacing: -0.2px;
  color: #000;
}
i, em { font-style: normal; }
svg { display: block; flex: none; overflow: visible; }
.defs { position: absolute; width: 0; height: 0; }

.window {
  width: 1250px;
  height: 592px;
  border: 1px solid #bcbcbc;
  background: #fcfcfc;
  display: flex;
  flex-direction: column;
  overflow: hidden;
}
.titlebar { height: 29px; flex: none; display: grid; grid-template-columns: 156px 1fr 156px; }
.app-icon { width: 16px; height: 16px; margin: 6px 0 0 9px; }
.caption {
  margin: 0;
  font: 15px/29px "Open Sans", sans-serif;
  letter-spacing: -0.6px;
  text-align: center;
  color: #222;
}
.win-buttons { display: flex; align-items: flex-start; justify-content: flex-end; padding-right: 6px; }
.wb-min { width: 8px; height: 2px; background: #222; margin: 12px 18px 0 0; }
.wb-max { width: 10px; height: 8px; border: 1px solid #222; border-top-width: 2px; margin: 6px 8px 0 0; }
.wb-close { width: 45px; height: 20px; background: #c75050; display: flex; align-items: center; justify-content: center; }
.wb-close svg { width: 8px; height: 8px; }

.client {
  margin: 0 6px;
  height: 555px;
  border: 1px solid #d2d2d2;
  background: #efefef;
  display: flex;
  flex-direction: column;
}
.menu {
  flex: none;
  height: 23px;
  border-bottom: 1px solid #b4b4b4;
  padding: 3px 0 0 9px;
  display: grid;
  grid-template-columns: 60px 52px 34px 40px 69px 54px 51px 44px 80px 64px 93px auto;
  line-height: 19px;
}
.menu .open {
  margin: 0 8px 0 -5px;
  padding: 0 4px;
  height: 17px;
  line-height: 17px;
  border: 1px solid #777;
  border-radius: 1px;
  background: #f6f6f6;
}

.toolbar {
  flex: none;
  height: 39px;
  border-top: 1px solid #fff;
  border-bottom: 1px solid #b4b4b4;
  padding: 0 0 2px 6px;
  display: flex;
  align-items: center;
}
.toolbar.third { height: 38px; padding-bottom: 0; }
.toolbar svg { width: 24px; height: 24px; }
.dis { opacity: .9; }
.grip {
  width: 6px;
  height: 30px;
  flex: none;
  background:
    radial-gradient(circle at 1px 1px, #c4c4c4 1.2px, transparent 1.3px) 0 0 / 6px 6px,
    radial-gradient(circle at 1px 1px, #c4c4c4 1.2px, transparent 1.3px) 3px 3px / 6px 6px,
    radial-gradient(circle at 1px 1px, #fff 1.2px, transparent 1.3px) 1px 1px / 6px 6px,
    radial-gradient(circle at 1px 1px, #fff 1.2px, transparent 1.3px) 4px 4px / 6px 6px;
}
.hgrip {
  height: 6px;
  background:
    radial-gradient(circle at 1px 1px, #c4c4c4 1.2px, transparent 1.3px) 0 0 / 6px 6px,
    radial-gradient(circle at 1px 1px, #c4c4c4 1.2px, transparent 1.3px) 3px 3px / 6px 6px,
    radial-gradient(circle at 1px 1px, #fff 1.2px, transparent 1.3px) 1px 1px / 6px 6px;
}
.group { display: flex; gap: 11px; margin: 0 14px 0 4px; }
.group.nav { margin: 0 13px 0 6px; }
.group.info { margin: 0 5px 0 6px; }
.drop { flex: none; width: 0; height: 0; border: 5px solid transparent; border-top-color: #000; border-bottom: 0; }
.drop.dim { border-top-color: #888; }
.select-box {
  margin: 2px 4px 0 0;
  width: 52px;
  height: 39px;
  flex: none;
  border: 2px solid #ee1c24;
  display: flex;
  align-items: center;
  padding-left: 1px;
}
.pressed {
  width: 35px;
  height: 33px;
  border: 1px solid #777;
  border-radius: 3px;
  background: linear-gradient(#cfcfcf, #dedede);
  display: flex;
  align-items: center;
  justify-content: center;
}
.pressed.narrow { width: 12px; }
.i-eps { margin-right: 4px; }
.group.attr { margin: 0 4px 0 9px; }
.i-tip { margin: 0 39px 0 9px; }
.more { font: bold 14px/18px "DejaVu Sans Condensed", sans-serif; width: 19px; letter-spacing: 0; }
.toolbar .grip + svg { margin-left: 6px; }
.abc { font: bold 8px "DejaVu Sans", sans-serif; letter-spacing: -.3px; }
.one { font: bold 8px "DejaVu Sans", sans-serif; letter-spacing: -.5px; fill: #777; }
.info-i { font: italic bold 15px "Liberation Serif", serif; fill: #fff; }
.eps { font: 26px "Liberation Serif", serif; fill: #5b3066; stroke: #5b3066; stroke-width: .5px; }
.eps.small { font-size: 20px; }
.book-q { font: bold 15px "Liberation Serif", serif; fill: #fff; }
.csw { font: bold 8px "DejaVu Sans", sans-serif; letter-spacing: 0; fill: #666; }

.group.edit { margin-right: 6px; }
.group.edit svg:first-child { width: 28px; margin-right: -4px; }
.group.edit2 { margin: 0 14px 0 8px; }
.group.labels { margin: 0 15px 0 4px; }
.toolbar .i-csw.i-csw { margin: 0 15px 0 4px; }
.toolbar .i-py.i-py { margin: 0 11px 0 5px; }
.toolbar.third .grip + svg { margin-left: 5px; }

.body { flex: none; height: 384px; display: flex; }
.side { width: 53px; border-right: 2px solid #b8b8b8; padding: 7px 0 0 5px; }
.side .hgrip { display: block; width: 41px; }
.side .hgrip + .side-item { margin-top: 4px; }
.side-item { height: 34px; padding-left: 3px; display: flex; align-items: flex-start; }
.side-item svg { width: 24px; height: 24px; }
.side-item .drop { margin: 10px 0 0 6px; }
.side .hgrip.last { margin-top: 4px; }

.dock { display: flex; flex-direction: column; }
.layers { width: 256px; }
.dock-title { height: 21px; padding: 3px 1px 0 2px; display: flex; align-items: flex-start; flex: none; }
.dock-title .hgrip { flex: 1; margin-top: 4px; }
.dock-title span { text-align: center; width: 78px; line-height: 16px; }
.layers .dock-title span { font-size: 10px; letter-spacing: -0.3px; }
.dock-title .hgrip + b { margin-left: 2px; }
.dock-title b { width: 14px; height: 14px; margin-left: 1px; border: 1px solid #777; border-radius: 2px; background: #f8f8f8; }
.dock-title b svg { width: 12px; height: 12px; }
.mini-bar { height: 31px; flex: none; display: flex; align-items: center; gap: 11px; padding: 0 0 1px 7px; }
.mini-bar svg { width: 16px; height: 16px; }
.mini-bar .drop { margin: 0 -3px 0 -6px; }
.tree { flex: 1; background: #fff; border: 1px solid #b4b4b4; border-radius: 2px; padding-top: 2px; }
.layer { height: 16px; display: flex; align-items: center; font-weight: bold; letter-spacing: 0.1px; padding-left: 10px; }
.layer span { line-height: 18px; padding-top: 1px; }
.layer.current {
  height: 18px;
  margin: -2px 0 0 -1px;
  width: 255px;
  padding-left: 9px;
  background: #efefef;
  border: 2px solid #ee1c24;
}
.layer.current span { text-decoration: underline; padding-top: 2px; }
.layer.current .branch { height: 8px; }
.branch { width: 10px; height: 16px; border-left: 1px dotted #888; flex: none; display: flex; flex-direction: column; }
.branch::after { content: ""; height: 8px; border-bottom: 1px dotted #888; }
.branch.end { height: 8px; align-self: flex-start; }
.check { width: 13px; height: 13px; flex: none; border: 1px solid #aaa; border-radius: 1px; background: #fff; }
.check svg { width: 11px; height: 11px; }
.layer .check { margin: 0 6px 0 3px; }
.swatch { width: 16px; height: 16px; margin-right: 6px; border: 1px solid #8d6070; border-bottom: 0; flex: none; }
.pink.swatch { background: #e28ca5; }
.green.swatch { background: #459a54; border-color: #2f6c3a; height: 14px; }

.splitter { width: 6px; display: flex; justify-content: center; padding-top: 129px; }
.splitter i { width: 3px; height: 62px; background: radial-gradient(circle at 1px 1px, #bdbdbd 1.2px, #fff0 1.3px) 0 0 / 3px 5px; }
.s2 { width: 7px; }
.s2 i { height: 122px; }
.map { width: 561px; height: 383px; margin-top: 1px; border: 1px solid #b4b4b4; border-radius: 2px; background: #fff; }
.map svg { width: 559px; height: 381px; }
.map path { stroke: #222; stroke-width: 3; stroke-linejoin: round; }
.green path { fill: #4f960a; }
.pink path { fill: #e28ca5; }
.hole { fill: #fff; stroke: #222; }
.knot { fill: #1d3a05; }

.link { width: 351px; }
.link .dock-title span { width: 76px; letter-spacing: -0.35px; }
.big-bar { height: 60px; flex: none; display: flex; gap: 18px; padding: 9px 0 0 8px; }
.big-bar button {
  width: 42px;
  height: 42px;
  padding: 0;
  border: 1px solid #e4e4e4;
  border-radius: 7px;
  background: linear-gradient(#f3f3f3, #e2e2e2);
  display: flex;
  align-items: center;
  justify-content: center;
}
.big-bar button:first-child { margin-right: -4px; }
.big-bar svg { height: 24px; }
.files {
  width: 328px;
  height: 274px;
  margin: 0 0 0 8px;
  padding: 1px 0 0;
  list-style: none;
  background: #fff;
  border: 1px solid #b4b4b4;
  border-radius: 2px;
  letter-spacing: 0.05px;
}
.files li { height: 16px; padding-left: 11px; display: flex; line-height: 19px; }
.files li.current { background: #efefef; letter-spacing: -0.1px; }
.files svg { width: 16px; height: 16px; margin: 0 5px 0 3px; }
.help { margin: 5px 15px 0 0; text-align: right; line-height: 19px; color: #0000f0; letter-spacing: 0; }
.help a { text-decoration: underline; }

.status { flex: 1; display: flex; align-items: center; white-space: nowrap; padding-left: 338px; }
.status > * { flex: none; }
.label { padding-top: 2px; }
.field { height: 20px; background: #fff; border: 1px solid #aaa; border-radius: 2px; display: flex; line-height: 20px; }
.field em { flex: 1; padding-left: 4px; }
.field b { width: 16px; border-left: 1px solid #aaa; background: #f3f3f3; display: flex; flex-direction: column; align-items: center; justify-content: center; }
.t-coord { width: 68px; }
.coord { width: 110px; justify-content: center; margin-right: 5px; }
.i-mouse { width: 16px; height: 16px; margin-right: 13px; }
.t-scale { width: 49px; }
.scale { width: 87px; margin-right: 7px; }
.i-lock { width: 14px; height: 16px; margin-right: 13px; }
.t-magn { width: 48px; }
.spin { height: 22px; line-height: 22px; }
.spin b { width: 17px; justify-content: space-around; background: linear-gradient(#f3f3f3 9px, #aaa 9px 10px, #f3f3f3 10px); }
.magn { width: 77px; margin-right: 8px; }
.t-rot { width: 61px; }
.rot { width: 76px; margin-right: 7px; }
.up, .down { border: 4px solid transparent; }
.up { border-bottom-color: #000; border-top: 0; }
.down { border-top-color: #000; border-bottom: 0; }
.status .check { margin-right: 4px; }
.t-render { width: 74px; }
.i-globe { width: 16px; height: 16px; margin-right: 3px; }
.t-epsg { width: 76px; }
.i-chat { width: 17px; height: 16px; margin-right: 20px; }
.i-size { width: 13px; height: 13px; align-self: flex-end; }
```
